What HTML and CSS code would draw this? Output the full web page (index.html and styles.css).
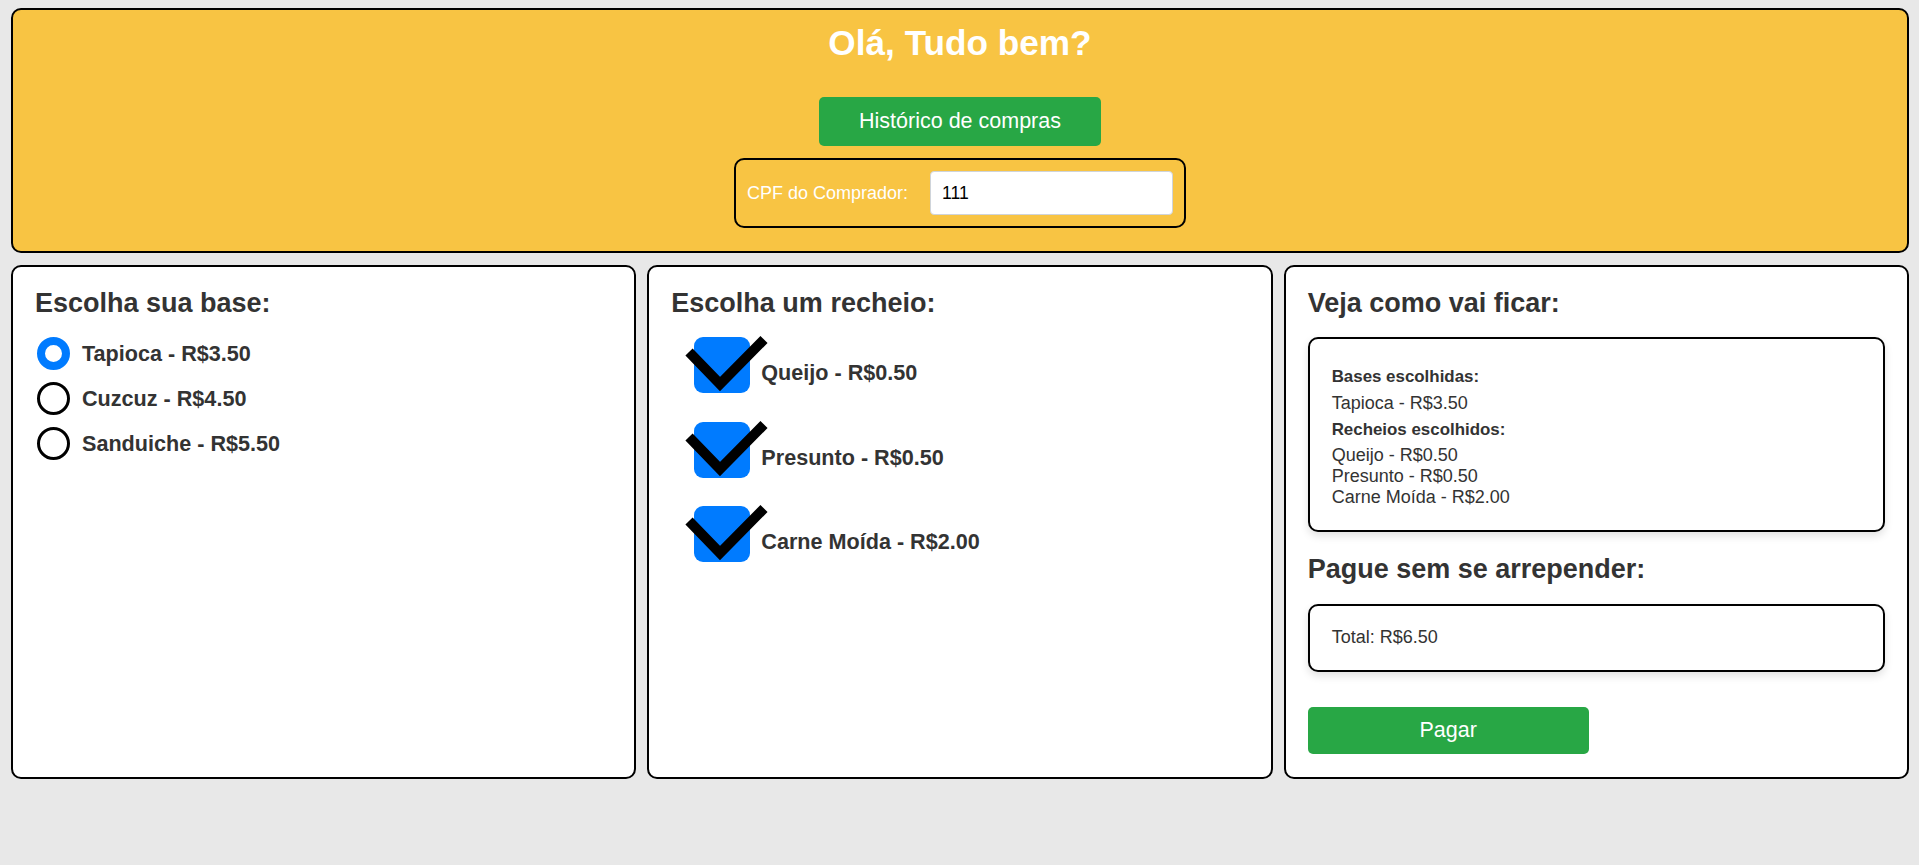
FILE: index.html
```html
<!DOCTYPE html>
<html lang="pt-BR">
<head>
<meta charset="utf-8">
<title>Tapiocaria</title>
<link rel="stylesheet" href="styles.css">
</head>
<body>
<div class="page">
  <header class="hero">
    <h1 class="hero-title">Olá, Tudo bem?</h1>
    <button class="btn btn-history" type="button">Histórico de compras</button>
    <div class="cpf-box">
      <label class="cpf-label" for="cpf">CPF do Comprador:</label>
      <input class="cpf-input" id="cpf" type="text" value="111">
    </div>
  </header>

  <main class="panels">
    <section class="panel">
      <h2 class="panel-title">Escolha sua base:</h2>
      <div class="radio-list">
        <div class="radio-row"><span class="radio radio-on"></span><span class="opt-text">Tapioca - R$3.50</span></div>
        <div class="radio-row"><span class="radio"></span><span class="opt-text">Cuzcuz - R$4.50</span></div>
        <div class="radio-row"><span class="radio"></span><span class="opt-text">Sanduiche - R$5.50</span></div>
      </div>
    </section>

    <section class="panel">
      <h2 class="panel-title">Escolha um recheio:</h2>
      <div class="check-list">
        <div class="check-row">
          <span class="check-box"><svg class="check-mark" viewBox="0 0 90 65" width="90" height="65"><polyline points="5,20 36,52 80,7.5" fill="none" stroke="#000" stroke-width="10" stroke-linejoin="miter" stroke-miterlimit="4"/></svg></span>
          <span class="opt-text check-text">Queijo - R$0.50</span>
        </div>
        <div class="check-row">
          <span class="check-box"><svg class="check-mark" viewBox="0 0 90 65" width="90" height="65"><polyline points="5,20 36,52 80,7.5" fill="none" stroke="#000" stroke-width="10" stroke-linejoin="miter" stroke-miterlimit="4"/></svg></span>
          <span class="opt-text check-text">Presunto - R$0.50</span>
        </div>
        <div class="check-row">
          <span class="check-box"><svg class="check-mark" viewBox="0 0 90 65" width="90" height="65"><polyline points="5,20 36,52 80,7.5" fill="none" stroke="#000" stroke-width="10" stroke-linejoin="miter" stroke-miterlimit="4"/></svg></span>
          <span class="opt-text check-text">Carne Moída - R$2.00</span>
        </div>
      </div>
    </section>

    <section class="panel">
      <h2 class="panel-title">Veja como vai ficar:</h2>
      <div class="card summary">
        <p class="sum-label">Bases escolhidas:</p>
        <p class="sum-value sum-base">Tapioca - R$3.50</p>
        <p class="sum-label sum-label-2">Recheios escolhidos:</p>
        <div class="sum-fillings">
          <p class="sum-value">Queijo - R$0.50</p>
          <p class="sum-value">Presunto - R$0.50</p>
          <p class="sum-value">Carne Moída - R$2.00</p>
        </div>
      </div>
      <h2 class="panel-title panel-title-2">Pague sem se arrepender:</h2>
      <div class="card total">
        <p class="sum-value">Total: R$6.50</p>
      </div>
      <button class="btn btn-pay" type="button">Pagar</button>
    </section>
  </main>
</div>
</body>
</html>
```

FILE: styles.css
```css
* {
  box-sizing: border-box;
}

html, body {
  margin: 0;
  padding: 0;
  background: #e8e8e8;
}

body {
  font-family: "Liberation Sans", Arial, sans-serif;
  color: #333;
}

.page {
  padding: 8px 10px 0 11px;
}

.hero {
  background: #f8c443;
  border: 2px solid #000;
  border-radius: 10px;
  padding: 13px 0 23px;
  display: flex;
  flex-direction: column;
  align-items: center;
}

.hero-title {
  margin: 0;
  font-size: 35.2px;
  line-height: 40px;
  font-weight: bold;
  color: #fff;
}

.btn {
  font-family: "Liberation Sans", Arial, sans-serif;
  border: none;
  background: #28a745;
  color: #fff;
  font-size: 21.5px;
  line-height: 25px;
  border-radius: 5px;
  cursor: pointer;
}

.btn-history {
  margin-top: 34px;
  width: 282px;
  height: 49px;
  padding: 0;
}

.cpf-box {
  margin-top: 12px;
  border: 2px solid #000;
  border-radius: 10px;
  padding: 11px;
  display: flex;
  align-items: center;
  gap: 23px;
}

.cpf-label {
  color: #fff;
  font-size: 18px;
  width: 160px;
  white-space: nowrap;
}

.cpf-input {
  width: 243px;
  height: 44px;
  border: 1px solid #cfd4da;
  border-radius: 4px;
  padding: 0 11px;
  font-family: "Liberation Sans", Arial, sans-serif;
  font-size: 17.6px;
  color: #000;
  background: #fff;
}

.panels {
  margin-top: 12px;
  display: grid;
  grid-template-columns: repeat(3, 1fr);
  gap: 11px;
}

.panel {
  background: #fff;
  border: 2px solid #000;
  border-radius: 10px;
  padding: 21px 22px 23px;
  display: flex;
  flex-direction: column;
  align-items: flex-start;
}

.panel-title {
  margin: 0 0 19px;
  font-size: 27px;
  line-height: 30px;
  font-weight: bold;
  color: #333;
}

.panel-title-2 {
  margin-top: 22px;
  margin-bottom: 20px;
}

.radio-list {
  display: flex;
  flex-direction: column;
  gap: 12px;
}

.radio-row {
  display: flex;
  align-items: center;
  height: 33px;
}

.radio {
  width: 33px;
  height: 33px;
  border-radius: 50%;
  border: 3px solid #000;
  background: #fff;
  margin-left: 2px;
  margin-right: 12px;
  flex: none;
}

.radio-on {
  border: 8px solid #007bff;
}

.opt-text {
  font-size: 21.6px;
  line-height: 24px;
  font-weight: bold;
  color: #333;
  white-space: nowrap;
}

.check-list {
  display: flex;
  flex-direction: column;
  gap: 28.5px;
}

.check-row {
  display: flex;
  align-items: flex-start;
  height: 56px;
  margin-left: 23px;
}

.check-box {
  position: relative;
  width: 56px;
  height: 56px;
  background: #007bff;
  border-radius: 9px;
  flex: none;
}

.check-mark {
  position: absolute;
  left: -10px;
  top: -5px;
  overflow: visible;
}

.check-text {
  position: relative;
  margin-left: 11px;
  margin-top: 24px;
}

.card {
  width: 100%;
  background: #fff;
  border: 2px solid #000;
  border-radius: 10px;
  box-shadow: 0 4px 8px rgba(0, 0, 0, 0.12);
  padding-left: 22px;
  padding-right: 22px;
}

.summary {
  padding-top: 28px;
  padding-bottom: 22.5px;
}

.total {
  padding-top: 21px;
  padding-bottom: 22px;
}

.sum-label {
  margin: 0;
  font-size: 16.9px;
  line-height: 19px;
  font-weight: bold;
  color: #333;
}

.sum-value {
  margin: 0;
  font-size: 18px;
  line-height: 21px;
  color: #333;
}

.sum-base {
  margin-top: 6.5px;
}

.sum-label-2 {
  margin-top: 6.5px;
}

.sum-fillings {
  margin-top: 5.5px;
}

.btn-pay {
  margin-top: 35px;
  width: 281px;
  height: 47px;
  padding: 0;
}
```
